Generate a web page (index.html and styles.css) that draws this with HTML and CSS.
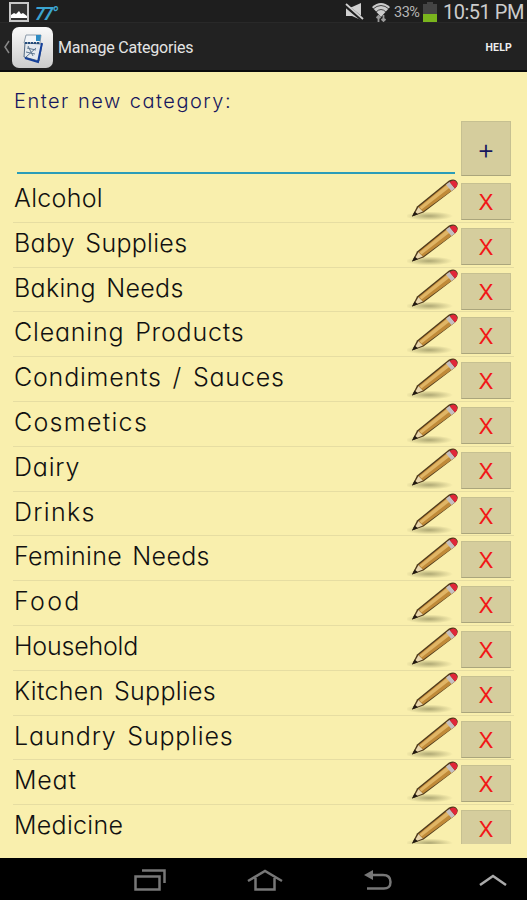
FILE: index.html
```html
<!DOCTYPE html>
<html lang="en">
<head>
    <meta charset="UTF-8">
    <meta name="viewport" content="width=device-width, initial-scale=1.0">
    <title>Manage Categories</title>
    <link rel="stylesheet" href="styles.css">
</head>
<body>
    <div class="status-bar">
        <svg class="picture-icon" width="20" height="20" viewBox="0 0 20 20">
            <rect x="1" y="1" width="18" height="18" fill="#333" stroke="#c8c8c8" stroke-width="2"/>
            <path d="M2 16v-3l3-2 2 1 3-3 2 3 2-1 4 3v2z" fill="#fff"/>
        </svg>
        <span class="temperature">77°</span>
        <svg class="mute-icon" width="19" height="18" viewBox="0 0 19 18">
            <path d="M1 4h6l9-4v17l-9-4H1z" fill="#d0d0d0"/>
            <path d="M0 2l18 15" stroke="#1f1f1f" stroke-width="4"/>
            <path d="M1 1l17 15" stroke="#d0d0d0" stroke-width="1.800"/>
        </svg>
        <svg class="wifi-icon" width="18" height="21" viewBox="0 0 18 21">
            <path d="M0 5Q9-3 18 5L9 15z" fill="#ccc"/>
            <path d="M1 7Q9 0 17 7M4 10Q9 5 14 10" fill="none" stroke="#444" stroke-width="1"/>
            <path d="M6.500 20v-7M4.500 16l2-2 2 2M11.500 13v7M9.500 17l2 2 2-2" fill="none" stroke="#999" stroke-width="1.800"/>
        </svg>
        <span class="percent">33%</span>
        <svg class="battery-icon" width="14" height="20" viewBox="0 0 14 20">
            <path d="M4 0h6v2h4v18H0V2h4z" fill="#444"/>
            <path d="M0 12h14v8H0z" fill="#7ab51d"/>
        </svg>
        <span class="clock">10:51 PM</span>
    </div>

    <div class="action-bar">
        <svg class="back" width="7" height="14" viewBox="0 0 7 14"><path d="M6 1L2 7l4 6" fill="none" stroke="#888" stroke-width="1.500"/></svg>
        <div class="app-icon">
            <svg width="26" height="34" viewBox="0 0 26 34">
                <path d="M6 4h15l-1 8H4z" fill="#f2f5f8" stroke="#8d9cab"/>
                <path d="M16 4h5l-1 6h-4z" fill="#2f8cc4"/>
                <path d="M5 12l17 1-3 17-15-4z" fill="#e4e9ee" stroke="#536b83"/>
                <path d="M22 12l-4 19-13-4" fill="none" stroke="#15409a" stroke-width="2"/>
                <path d="M5 12h15" stroke="#244c7c" stroke-width="2" stroke-dasharray="2 1"/>
                <path d="M7 17l9 2M6 21l9 2M6 26l10-9M8 15l5 10" stroke="#5c7690"/>
            </svg>
        </div>
        <h1>Manage Categories</h1>
        <a class="help">HELP</a>
    </div>

    <main class="content">
        <label class="new-label" for="category">Enter new category:</label>
        <div class="new-row">
            <input type="text" id="category">
            <button class="btn add">+</button>
        </div>

        <div class="categories">
            <div class="category"><span class="name">Alcohol</span><svg class="pencil"><use href="#pencil"/></svg><button class="btn">X</button></div>
            <div class="category"><span class="name">Baby Supplies</span><svg class="pencil"><use href="#pencil"/></svg><button class="btn">X</button></div>
            <div class="category"><span class="name">Baking Needs</span><svg class="pencil"><use href="#pencil"/></svg><button class="btn">X</button></div>
            <div class="category"><span class="name wide">Cleaning Products</span><svg class="pencil"><use href="#pencil"/></svg><button class="btn">X</button></div>
            <div class="category"><span class="name wide">Condiments / Sauces</span><svg class="pencil"><use href="#pencil"/></svg><button class="btn">X</button></div>
            <div class="category"><span class="name wider">Cosmetics</span><svg class="pencil"><use href="#pencil"/></svg><button class="btn">X</button></div>
            <div class="category"><span class="name wide">Dairy</span><svg class="pencil"><use href="#pencil"/></svg><button class="btn">X</button></div>
            <div class="category"><span class="name wider">Drinks</span><svg class="pencil"><use href="#pencil"/></svg><button class="btn">X</button></div>
            <div class="category"><span class="name">Feminine Needs</span><svg class="pencil"><use href="#pencil"/></svg><button class="btn">X</button></div>
            <div class="category"><span class="name widest">Food</span><svg class="pencil"><use href="#pencil"/></svg><button class="btn">X</button></div>
            <div class="category"><span class="name narrow">Household</span><svg class="pencil"><use href="#pencil"/></svg><button class="btn">X</button></div>
            <div class="category"><span class="name">Kitchen Supplies</span><svg class="pencil"><use href="#pencil"/></svg><button class="btn">X</button></div>
            <div class="category"><span class="name wide">Laundry Supplies</span><svg class="pencil"><use href="#pencil"/></svg><button class="btn">X</button></div>
            <div class="category"><span class="name wide">Meat</span><svg class="pencil"><use href="#pencil"/></svg><button class="btn">X</button></div>
            <div class="category"><span class="name">Medicine</span><svg class="pencil"><use href="#pencil"/></svg><button class="btn">X</button></div>
        </div>
    </main>

    <nav class="nav-bar">
        <svg width="32" height="22" viewBox="0 0 32 22"><path d="M1.500 7.500h24v13h-24zM8 1.500h22.500V14" fill="none" stroke="#777" stroke-width="2.500"/></svg>
        <svg width="36" height="22" viewBox="0 0 36 22"><path d="M1 12L18 2l17 10M8.500 9v11.500h19V9" fill="none" stroke="#777" stroke-width="2.500"/></svg>
        <svg width="28" height="20" viewBox="0 0 28 20"><path d="M6 5h13q7.500 0 7.500 7t-7.500 6.500H3" fill="none" stroke="#777" stroke-width="2.500"/><path d="M0 5l9-5v10z" fill="#777"/></svg>
        <svg width="28" height="12" viewBox="0 0 28 12"><path d="M1 11L14 2l13 9" fill="none" stroke="#aaa" stroke-width="2.500"/></svg>
    </nav>

    <svg class="defs">
        <defs>
            <radialGradient id="shade">
                <stop offset="0" stop-color="#8f8a5c" stop-opacity=".7"/>
                <stop offset="1" stop-color="#8f8a5c" stop-opacity="0"/>
            </radialGradient>
        </defs>
        <symbol id="pencil" viewBox="0 0 52 43">
            <ellipse cx="22" cy="38" rx="24" ry="4.500" fill="url(#shade)"/>
            <path d="M5 38.500l5-10L42 2.500q6-3 8.500 2 1 3-2.500 6L16.500 34.500z" fill="#4e391b"/>
            <path d="M7 37l4.500-8 4.500 4.500z" fill="#ead7ad"/>
            <path d="M11.500 29L41 5l5.500 6.500L16 33.500z" fill="#c08a38"/>
            <path d="M12.500 29.300L41 6l2.500 3L14.500 31.500z" fill="#e0b565"/>
            <path d="M5 38.500l2.500-5 3.500 2.800z" fill="#221a10"/>
            <path d="M39 6.700l3.500-3 5.500 6.800-3.500 2.500z" fill="#c4bfc0"/>
            <path d="M42.500 4q5.500-3.500 7.500 1 1 2.500-2 5.500z" fill="#e02638"/>
        </symbol>
    </svg>
</body>
</html>
```

FILE: styles.css
```css
* { box-sizing: border-box; }
body { margin: 0; width: 527px; height: 900px; overflow: hidden; display: flex; flex-direction: column; background: #000; font-family: Roboto, sans-serif; }
.defs { position: absolute; width: 0; height: 0; }

.status-bar { height: 22px; display: flex; align-items: center; background: #1e1e1e; color: #ccc; padding: 2px 5px 0 9px; }
.temperature { margin-left: 6px; margin-top: 3px; font-size: 18px; font-style: italic; font-weight: bold; letter-spacing: -1.8px; color: #3ba4d0; }
.mute-icon { margin-left: auto; }
.wifi-icon { margin-left: 8px; }
.percent { width: 27px; margin-left: 4px; font-size: 14.5px; letter-spacing: -0.5px; color: #b5b5b5; }
.battery-icon { margin-left: 2px; }
.clock { width: 79px; margin-left: 6px; font-size: 20px; line-height: 20px; white-space: nowrap; letter-spacing: -0.5px; }

.action-bar { height: 50px; display: flex; align-items: center; padding: 0 15px 0 3px; background: #222; border-top: 1px solid #292929; border-bottom: 2px solid #0b0b0b; color: #eee; }
.app-icon { width: 41px; height: 41px; margin: 2px 0 0 2px; display: flex; align-items: center; justify-content: center; border-radius: 7px; background: linear-gradient(#fafafa, #ccc); }
.action-bar h1 { margin: 2px 0 0 5px; font-size: 16px; font-weight: normal; letter-spacing: -0.2px; color: #e4e4e4; }
.help { margin: 2px 0 0 auto; font-size: 10.5px; font-weight: bold; letter-spacing: 0.2px; }

.content { height: 786px; padding: 16px 13px 0 13px; background: #f9efad; font-family: Inter, sans-serif; font-feature-settings: "cv11"; }
.new-label { display: block; height: 33px; padding-left: 1px; font-size: 20px; line-height: 26px; font-weight: 300; letter-spacing: 1.5px; word-spacing: 1px; color: #17175e; }
.new-row { height: 57px; display: flex; align-items: flex-start; justify-content: space-between; padding: 0 3px 0 4px; }
.new-row input { width: 438px; height: 53px; border: none; border-bottom: 2px solid #2b9cb8; outline: none; background: none; font: inherit; }
.btn { width: 50px; height: 37px; padding: 0; border: 1px solid #c6c091; border-bottom-color: #aaa57c; background: #d5cd9d; color: #f11717; font-family: Inter, sans-serif; font-size: 22px; font-weight: normal; line-height: 37px; }
.btn.add { height: 55px; font-size: 28px; font-weight: 300; line-height: 50px; color: #17175e; }

/* the last row is cut by the bottom of the list */
.categories { height: 666px; overflow: hidden; }
.category { height: 44.8px; display: flex; align-items: flex-start; padding-right: 3px; border-bottom: 1px solid #e6dda2; }
.name { flex: 1; padding-left: 1px; font-size: 25px; line-height: 40px; font-weight: 300; letter-spacing: 0.3px; word-spacing: 3px; color: #111; white-space: nowrap; }
.name.narrow { letter-spacing: -0.2px; }
.name.wide { letter-spacing: 0.8px; }
.name.wider { letter-spacing: 1.3px; }
.name.widest { letter-spacing: 2.3px; }
.pencil { width: 52px; height: 43px; margin-right: 2px; }
.category .btn { margin-top: 5px; }

.nav-bar { height: 42px; display: flex; align-items: center; padding: 2px 0 0 134px; background: #000; }
.nav-bar svg + svg { margin-left: 81px; }
.nav-bar svg:last-child { margin-left: 87px; }
```
